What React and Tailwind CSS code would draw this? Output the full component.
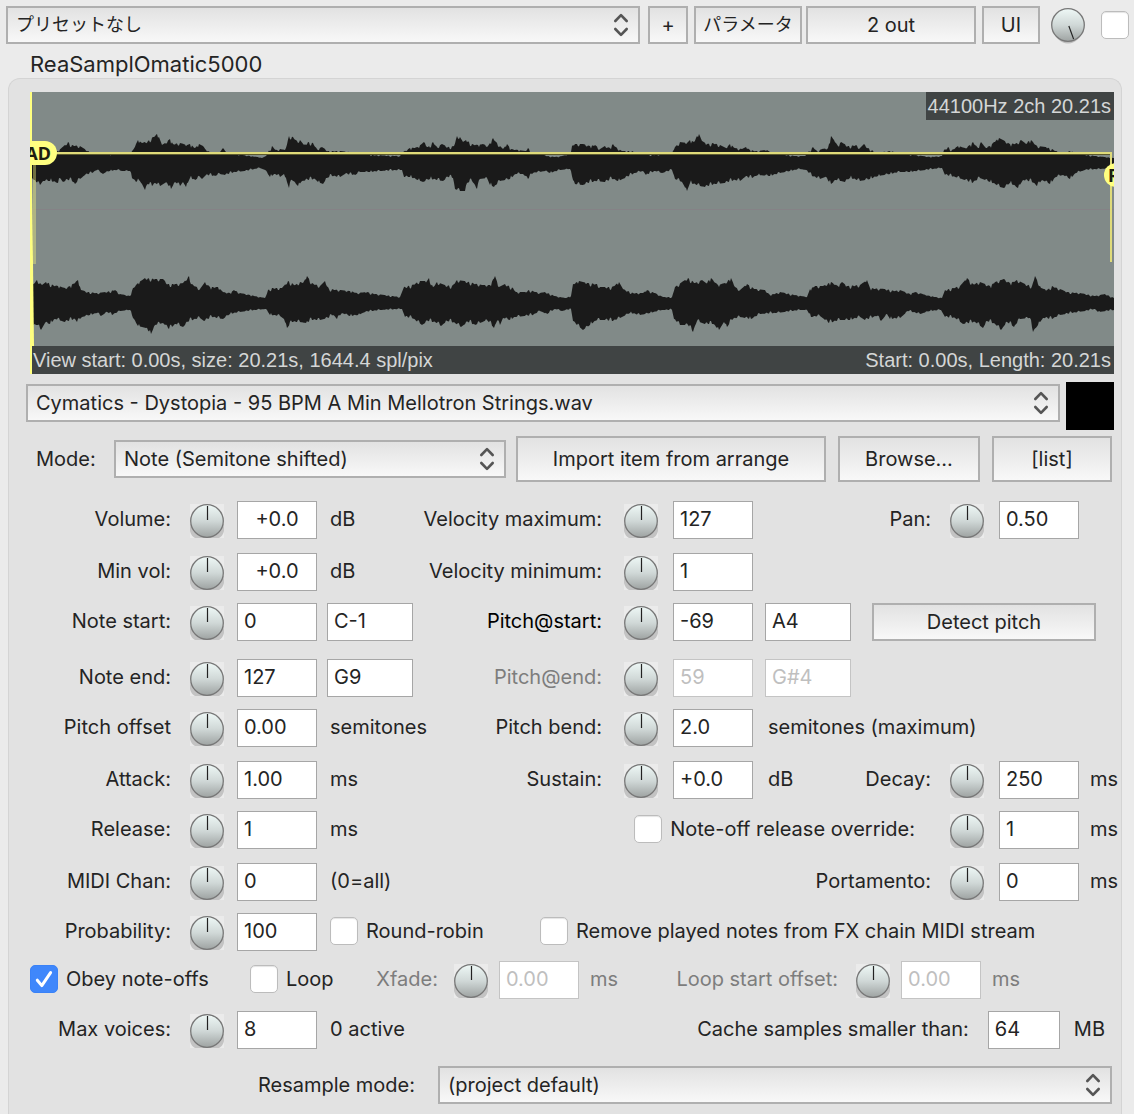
import React from "react";

const LEFT_TOP =
  "30,156 40,154 50,152 58,151 65,145 68,142 72,145 80,146 88,151 92,153 100,154 120,154 130,153 133,150 138,140 142,143 148,141 153,137 157,134 159,137 162,145 165,143 170,139 173,144 180,143 187,145 190,144 195,148 199,144 203,146 206,150 210,152 220,152 223,148 226,152 235,154 250,156 258,157 262,158 266,156 268,152 272,146 276,150 280,149 285,150 289,136 293,137 297,141 300,140 304,145 308,142 313,143 317,149 322,147 328,151 340,151 350,152 360,153 370,155 400,156 403,152 410,148 418,147 424,142 428,147 433,142 437,147 442,144 448,147 454,146 457,136 460,137 463,142 466,140 472,144 478,145 483,144 488,146 490,143 493,138 497,143 503,149 507,144 511,149 518,150 525,151 528,148 532,152 540,154 548,156 555,157 562,156 570,154 572,146 575,144 583,144 590,146 595,145 600,149 605,146 610,148 613,144 617,148 622,151 632,151 640,154 655,155 672,153 675,147 680,142 687,143 690,140 694,142 697,136 699,134 702,141 707,144 713,143 720,145 726,148 730,144 735,148 742,149 746,147 750,150 756,151 767,150 770,152 780,154 795,156 805,156 809,151 813,147 817,151 822,149 828,148 831,136 834,140 838,146 841,142 848,146 856,145 860,148 864,144 868,148 872,150 875,153 890,151 900,153 915,155 930,157 942,156 944,150 948,147 952,150 958,146 965,148 970,145 973,142 978,148 981,142 985,147 990,146 994,142 999,138 1003,140 1010,144 1017,143 1021,140 1025,143 1031,140 1037,146 1046,147 1052,149 1056,151 1065,153 1070,151 1080,154 1095,156 1114,158";
const LEFT_BOTTOM =
  "30,176 34,180 40,185 43,181 50,181 58,183 60,178 63,182 68,180 72,181 75,184 80,179 85,175 92,173 97,170 103,174 106,172 110,171 117,170 122,171 130,171 132,178 136,182 139,180 142,184 145,190 148,184 152,186 155,183 160,186 165,183 168,185 171,189 175,182 180,186 183,182 186,187 190,178 195,180 200,177 202,179 206,175 215,176 220,174 225,175 235,172 245,171 260,168 265,170 270,177 275,174 280,177 284,174 287,182 289,188 292,180 298,186 302,181 308,180 315,179 318,182 323,184 327,178 332,176 340,177 345,174 355,175 360,172 370,172 380,171 402,170 404,177 410,177 418,180 423,182 430,179 437,180 443,181 448,177 453,178 455,189 460,191 465,191 467,183 472,181 477,189 480,179 487,178 490,185 494,187 500,181 510,179 516,174 523,174 528,179 533,173 545,171 550,173 560,170 570,169 573,180 575,184 583,185 588,183 597,181 605,182 612,179 618,181 625,178 635,173 643,171 646,175 655,171 662,173 672,170 675,179 682,182 687,191 690,183 700,186 705,187 715,184 725,183 735,180 740,181 745,177 752,178 758,175 770,176 780,173 790,171 800,169 806,170 812,176 820,179 825,177 831,184 836,180 845,182 850,178 860,181 870,179 878,176 890,174 900,172 910,172 925,170 942,168 945,175 955,177 965,180 972,183 980,178 990,182 995,184 1000,187 1004,188 1010,183 1018,188 1023,180 1032,182 1037,186 1042,180 1050,184 1056,177 1063,175 1070,179 1076,173 1085,170 1100,169 1114,168";
const RIGHT_TOP =
  "30,285 33,284 37,280 42,285 46,282 53,285 58,286 65,288 70,286 78,280 81,290 88,292 97,293 105,292 115,290 120,294 130,296 133,288 138,283 145,278 155,279 163,279 168,284 175,284 183,283 189,276 192,284 200,289 205,282 210,287 218,287 223,292 230,293 234,290 240,293 250,295 265,298 268,290 272,288 282,288 288,281 295,285 300,282 303,283 307,276 312,283 320,286 325,281 329,289 340,290 350,291 357,293 367,292 375,294 385,295 400,297 404,287 412,285 420,281 427,281 429,278 433,287 437,282 445,285 452,286 457,280 465,281 473,283 482,285 490,285 495,276 499,287 505,284 513,288 516,292 525,292 529,290 540,293 545,292 555,296 565,298 571,296 573,284 579,281 587,283 597,284 600,287 612,287 619,282 623,289 633,293 643,293 647,290 655,293 663,297 672,297 675,287 682,282 688,278 695,283 702,280 706,283 711,278 718,285 725,283 731,278 735,287 740,290 747,284 755,289 765,290 770,295 780,292 795,295 807,297 810,289 815,286 823,286 831,282 838,286 842,282 847,286 860,285 867,280 870,288 885,289 895,291 900,290 910,294 915,292 930,296 942,298 945,290 953,288 960,286 967,278 973,284 980,282 990,286 995,282 1004,279 1010,283 1017,280 1025,284 1032,286 1035,276 1041,288 1047,290 1052,286 1060,289 1067,292 1080,293 1095,296 1105,294 1114,298";
const RIGHT_BOTTOM =
  "30,325 38,325 41,330 45,323 50,324 55,319 65,322 75,319 77,322 82,317 90,315 97,313 101,316 107,312 112,315 120,311 130,310 133,318 138,326 146,328 151,334 155,325 163,323 169,329 176,324 183,327 189,321 200,318 204,321 212,317 223,319 230,314 240,312 255,310 266,309 270,315 280,316 284,319 287,328 292,322 300,322 306,323 312,320 320,320 328,318 333,315 337,319 342,313 350,316 358,315 365,312 380,310 402,309 405,317 412,318 422,325 428,321 437,323 441,326 447,321 455,323 461,327 468,322 475,325 480,323 487,320 494,328 497,321 500,325 503,318 510,320 515,317 525,316 533,315 540,311 547,314 555,309 562,311 571,309 573,321 577,325 583,330 590,325 597,320 605,320 613,321 620,318 630,313 640,315 650,313 662,310 672,310 674,319 680,325 688,325 693,332 697,321 705,324 713,324 719,330 724,322 727,327 733,319 740,317 751,319 760,314 775,313 785,312 800,310 807,310 811,317 820,316 829,323 840,320 850,320 860,317 865,320 877,316 881,321 887,314 890,319 900,318 908,311 920,314 930,311 941,310 945,317 955,318 963,324 975,322 983,328 987,321 995,324 1001,330 1007,322 1014,327 1020,319 1030,318 1033,332 1038,325 1043,318 1052,319 1060,315 1072,313 1085,311 1095,309 1098,312 1114,310";

// Adds the fine sample-level ripple between the peaks of an envelope.
function envelope(text, direction, middle) {
  const peaks = text.split(" ").map((p) => p.split(",").map(Number));
  const out = [];
  for (let i = 0; i < peaks.length - 1; i++) {
    const [x0, y0] = peaks[i];
    const [x1, y1] = peaks[i + 1];
    out.push([x0, y0]);
    for (let x = x0 + 1; x < x1; x += 1) {
      const y = y0 + ((y1 - y0) * (x - x0)) / (x1 - x0);
      const depth = Math.min(3, Math.abs(y - middle) / 6);
      const ripple = x % 4 < 2 ? 0 : (((x >> 2) * 37) % 5) / 4;
      out.push([x, y + direction * depth * ripple]);
    }
  }
  out.push(peaks[peaks.length - 1]);
  return out;
}

function channel(top, bottom, middle) {
  return [...envelope(top, 1, middle), ...envelope(bottom, -1, middle).reverse()]
    .map((p) => p.join(","))
    .join(" ");
}

function Waveform() {
  return (
    <div className="relative ml-[21px] mr-[7px] h-[282px] overflow-hidden bg-[#818a88] font-['Liberation_Sans',sans-serif] text-[20px] leading-7 text-[#d4d6d6]">
      <svg viewBox="30 92 1084 282" preserveAspectRatio="none" className="block h-full w-full" aria-hidden="true">
        <rect x="30" y="209" width="1084" height="1" fill="#858286" />
        <polygon points={channel(LEFT_TOP, LEFT_BOTTOM, 162)} fill="#1a1a1a" />
        <polygon points={channel(RIGHT_TOP, RIGHT_BOTTOM, 303)} fill="#1a1a1a" />
        <rect x="30" y="346" width="1084" height="28" fill="#404444" />
        <rect x="33" y="164" width="3" height="100" fill="#f5f27a" fillOpacity="0.4" />
        <path d="M32 180 L34 346 H30 V180 Z" fill="#ffff80" />
        <rect x="30" y="92" width="2" height="282" fill="#ffff80" />
        <rect x="56" y="154" width="1054" height="1" fill="#5d5b30" />
        <path d="M56 153 H1111 V262" fill="none" stroke="#dfdb7a" strokeWidth="2" />
      </svg>
      <span className="absolute -left-3 top-[49px] flex h-6 w-[39px] items-center justify-end rounded-full bg-[#ffff80] pr-1.5 font-['Noto_Sans'] text-[18px] font-bold leading-6 text-[#1d1d10]">
        AD
      </span>
      <span className="absolute -right-3.5 top-[71px] flex h-6 w-6 items-center rounded-full bg-[#ffff80] pl-1 font-['Noto_Sans'] text-[18px] font-bold leading-6 text-[#1d1d10]">
        R
      </span>
      <span className="absolute right-0 top-0 whitespace-nowrap bg-[#404444] pl-0.5 pr-[3px]">44100Hz 2ch 20.21s</span>
      <div className="absolute inset-x-0 bottom-0 flex justify-between whitespace-nowrap pl-[3px] pr-[3px]">
        <span>View start: 0.00s, size: 20.21s, 1644.4 spl/pix</span>
        <span>Start: 0.00s, Length: 20.21s</span>
      </div>
    </div>
  );
}

function Button({ children, className }) {
  return (
    <button
      type="button"
      className={`border-2 border-[#afafaf] bg-linear-to-b from-[#e2e2e2] to-[#f8f8f8] text-center whitespace-nowrap ${className}`}
    >
      {children}
    </button>
  );
}

function Select({ id, label, value, className }) {
  return (
    <div className={`relative h-[38px] min-w-0 ${className}`}>
      <select
        id={id}
        aria-label={label}
        className="h-full w-full appearance-none border-2 border-[#afafaf] bg-linear-to-b from-[#e2e2e2] to-[#f8f8f8] pl-2 pr-9"
      >
        <option>{value}</option>
      </select>
      <svg viewBox="0 0 16 24" className="pointer-events-none absolute right-[11px] top-[7px] h-6 w-4" fill="none" stroke="#555" strokeWidth="2.6" strokeLinecap="round" strokeLinejoin="round" aria-hidden="true">
        <path d="M2.3 8 L8 2.2 L13.7 8" />
        <path d="M2.3 16 L8 21.8 L13.7 16" />
      </svg>
    </div>
  );
}

function Knob({ label, bare, disabled, angle = 0 }) {
  return (
    <span className={`relative h-[34px] w-[34px] shrink-0 ${bare ? "" : "mt-0.5 bg-[#ebebeb]"}`}>
      <svg viewBox="0 0 34 34" className="block h-full w-full overflow-visible" aria-hidden="true">
        <defs>
          <linearGradient id="knob" x1="0" y1="0" x2="0" y2="1">
            <stop offset="0" stopColor="#eef8f6" />
            <stop offset="0.5" stopColor="#d0d8d7" />
            <stop offset="1" stopColor="#9ea3a2" />
          </linearGradient>
        </defs>
        {bare ? (
          <ellipse cx="17" cy="19.5" rx="14.5" ry="16" fill="#bdbdbd" />
        ) : (
          <path d="M0 20 H34 V27 Q33 32 29 34 H5 Q1 32 0 27 Z" fill="#c3c3c3" />
        )}
        <circle cx="17" cy="17" r="16.3" fill="url(#knob)" stroke="#777" strokeWidth="1.3" />
        <path d="M17.5 2 V16" stroke="#222" strokeWidth="1.2" transform={`rotate(${angle} 17.5 17)`} />
      </svg>
      <input type="range" aria-label={label} disabled={disabled} className="absolute inset-0 h-full w-full opacity-0" />
    </span>
  );
}

function Field({ label, value, disabled, center, className = "w-20" }) {
  return (
    <input
      type="text"
      aria-label={label}
      defaultValue={value}
      disabled={disabled}
      className={`h-[38px] shrink-0 border border-[#a6a6a6] bg-white px-1.5 pb-0.5 disabled:border-[#c4c4c4] disabled:text-[#bfbfbf] ${
        center ? "text-center" : ""
      } ${className}`}
    />
  );
}

function Check({ id, label, checked }) {
  return (
    <span className="flex shrink-0 items-center gap-2 whitespace-nowrap">
      <span className="relative h-7 w-7 shrink-0">
        <input
          id={id}
          type="checkbox"
          aria-label={label ? undefined : "Bypass"}
          defaultChecked={checked}
          className="peer block h-7 w-7 appearance-none rounded-[5px] border border-[#bcbcbc] bg-white shadow-[inset_0_1px_1px_#e4e4e4] checked:border-[#3a82f7] checked:bg-[#3f87fb] checked:shadow-none"
        />
        <svg viewBox="0 0 28 28" className="pointer-events-none absolute inset-0 hidden h-7 w-7 peer-checked:block" fill="none" stroke="#fff" strokeWidth="3" strokeLinecap="round" strokeLinejoin="round" aria-hidden="true">
          <path d="M7.3 15.2 L11.8 20.6 L20.6 7.6" />
        </svg>
      </span>
      {label && <label htmlFor={id}>{label}</label>}
    </span>
  );
}

function Left({ label, name, value, note, unit, center, children }) {
  return (
    <div className="flex min-w-0 items-center whitespace-nowrap">
      <span className="w-[162px] shrink-0 pb-0.5 text-right">{label}</span>
      <span className="ml-[19px] flex">
        <Knob label={`${name} knob`} />
      </span>
      <span className="ml-[13px] flex items-center">
        <Field label={name} value={value} center={center} />
        {note && <Field label={`${name} note`} value={note} className="ml-2.5 w-[86px]" />}
        {unit && <span className="ml-[13px] pb-0.5">{unit}</span>}
        {children}
      </span>
    </div>
  );
}

function Middle({ label, name, value, note, unit, disabled, strong }) {
  return (
    <div className="flex min-w-0 items-center whitespace-nowrap">
      <span className={`w-[192px] shrink-0 pb-0.5 text-right ${disabled ? "text-[#7d7d7d]" : strong ? "text-black" : ""}`}>
        {label}
      </span>
      <span className="ml-[22px] flex">
        <Knob label={`${name} knob`} disabled={disabled} />
      </span>
      <span className="ml-[15px] flex items-center">
        <Field label={name} value={value} disabled={disabled} />
        {note && <Field label={`${name} note`} value={note} disabled={disabled} className="ml-3 w-[86px]" />}
        {unit && <span className="ml-[15px] pb-0.5">{unit}</span>}
      </span>
    </div>
  );
}

function Right({ label, name, value, unit, before, className = "" }) {
  return (
    <div className={`flex min-w-0 items-center whitespace-nowrap pr-[3px] ${className}`}>
      <span className="flex flex-1 justify-end pb-0.5">{before || label}</span>
      <span className="ml-[19px] flex">
        <Knob label={`${name} knob`} />
      </span>
      <span className="ml-[15px] flex items-center">
        <Field label={name} value={value} />
        <span className="ml-[11px] w-7 pb-0.5">{unit}</span>
      </span>
    </div>
  );
}

function Row({ children, className = "mt-3" }) {
  return <div className={`grid grid-cols-[401fr_390fr_321fr] ${className}`}>{children}</div>;
}

export default function App() {
  return (
    <main className="flex min-h-screen flex-col overflow-hidden bg-[#ebebeb] font-['Inter','Noto_Sans_CJK_JP',sans-serif] text-[20px] leading-7 text-[#242424]">
      <header className="flex items-center pl-1.5 pr-[5px] pt-1.5">
        <Select label="Preset" value="プリセットなし" className="flex-1 text-[18px]" />
        <Button className="ml-2 h-[38px] w-10">+</Button>
        <Button className="ml-1.5 h-[38px] w-[108px] text-[18px]">パラメータ</Button>
        <Button className="ml-1 h-[38px] w-[170px]">2 out</Button>
        <Button className="ml-1.5 h-[38px] w-[58px]">UI</Button>
        <span className="ml-[11px] mr-4 flex">
          <Knob label="Wet" bare angle={160} />
        </span>
        <Check id="bypass" />
      </header>

      <h1 className="pl-[30px] pt-1.5 text-[22px] leading-7">ReaSamplOmatic5000</h1>

      <section className="mx-2 mr-3 flex flex-1 flex-col rounded-t-xl border border-b-0 border-[#d4d4d4] bg-[#e2e2e2] pb-2.5 pt-[13px]">
        <Waveform />

        <div className="ml-[17px] mr-[7px] mt-2 flex gap-1.5">
          <Select label="Sample file" value="Cymatics - Dystopia - 95 BPM A Min Mellotron Strings.wav" className="mt-0.5 flex-1" />
          <div className="h-12 w-12 bg-black" />
        </div>

        <div className="ml-[27px] mr-[9px] mt-1.5 flex items-center whitespace-nowrap">
          <label htmlFor="mode" className="w-[78px]">Mode:</label>
          <Select id="mode" label="Mode" value="Note (Semitone shifted)" className="flex-[392]" />
          <Button className="ml-2.5 h-[46px] flex-[306]">Import item from arrange</Button>
          <Button className="ml-3 h-[46px] flex-[138]">Browse...</Button>
          <Button className="ml-3 h-[46px] flex-[116]">[list]</Button>
        </div>

        <Row className="mt-[19px]">
          <Left label="Volume:" name="Volume" value="+0.0" unit="dB" center />
          <Middle label="Velocity maximum:" name="Velocity maximum" value="127" />
          <Right label="Pan:" name="Pan" value="0.50" />
        </Row>
        <Row className="mt-3.5">
          <Left label="Min vol:" name="Min vol" value="+0.0" unit="dB" center />
          <Middle label="Velocity minimum:" name="Velocity minimum" value="1" />
        </Row>
        <Row>
          <Left label="Note start:" name="Note start" value="0" note="C-1" />
          <Middle label="Pitch@start:" name="Pitch at start" value="-69" note="A4" strong />
          <div className="flex min-w-0 pl-[72px] pr-[25px]">
            <Button className="h-[38px] flex-1">Detect pitch</Button>
          </div>
        </Row>
        <Row className="mt-[18px]">
          <Left label="Note end:" name="Note end" value="127" note="G9" />
          <Middle label="Pitch@end:" name="Pitch at end" value="59" note="G#4" disabled />
        </Row>
        <Row>
          <Left label="Pitch offset" name="Pitch offset" value="0.00" unit="semitones" />
          <Middle label="Pitch bend:" name="Pitch bend" value="2.0" unit="semitones (maximum)" />
        </Row>
        <Row className="mt-3.5">
          <Left label="Attack:" name="Attack" value="1.00" unit="ms" />
          <Middle label="Sustain:" name="Sustain" value="+0.0" unit="dB" />
          <Right label="Decay:" name="Decay" value="250" unit="ms" />
        </Row>
        <Row>
          <Left label="Release:" name="Release" value="1" unit="ms" />
          <Right
            name="Note-off release"
            value="1"
            unit="ms"
            className="col-span-2"
            before={
              <span className="mr-4 flex">
                <Check id="override" label="Note-off release override:" />
              </span>
            }
          />
        </Row>
        <Row className="mt-3.5">
          <Left label="MIDI Chan:" name="MIDI channel" value="0" unit="(0=all)" />
          <Right label="Portamento:" name="Portamento" value="0" unit="ms" className="col-start-3" />
        </Row>
        <Row>
          <Left label="Probability:" name="Probability" value="100">
            <span className="ml-[13px] flex pb-0.5">
              <Check id="robin" label="Round-robin" />
            </span>
          </Left>
          <div className="col-span-2 flex min-w-0 items-center pb-0.5 pl-[130px]">
            <Check id="remove" label="Remove played notes from FX chain MIDI stream" />
          </div>
        </Row>

        <div className="mt-2.5 flex items-center whitespace-nowrap pl-[21px]">
          <span className="flex w-[220px] pb-0.5">
            <Check id="obey" label="Obey note-offs" checked />
          </span>
          <span className="flex w-[126px] pb-0.5">
            <Check id="loop" label="Loop" />
          </span>
          <span className="mr-4 w-[62px] pb-0.5 text-right text-[#7d7d7d]">Xfade:</span>
          <Knob label="Xfade knob" disabled />
          <Field label="Xfade" value="0.00" disabled className="ml-[11px] w-20" />
          <span className="ml-[11px] pb-0.5 text-[#7d7d7d]">ms</span>
          <span className="ml-[18px] mr-[18px] w-[202px] pb-0.5 text-right text-[#7d7d7d]">Loop start offset:</span>
          <Knob label="Loop start offset knob" disabled />
          <Field label="Loop start offset" value="0.00" disabled className="ml-[11px] w-20" />
          <span className="ml-[11px] pb-0.5 text-[#7d7d7d]">ms</span>
        </div>

        <Row>
          <Left label="Max voices:" name="Max voices" value="8" unit="0 active" />
          <div className="col-span-2 flex min-w-0 items-center justify-end whitespace-nowrap pr-4">
            <label htmlFor="cache" className="pb-0.5">Cache samples smaller than:</label>
            <input id="cache" type="text" defaultValue="64" className="ml-[19px] h-[38px] w-[72px] border border-[#a6a6a6] bg-white px-1.5 pb-0.5" />
            <span className="ml-3.5 pb-0.5">MB</span>
          </div>
        </Row>

        <div className="mr-[9px] mt-[17px] flex items-center whitespace-nowrap">
          <label htmlFor="resample" className="w-[406px] text-right">Resample mode:</label>
          <Select id="resample" label="Resample mode" value="(project default)" className="ml-[23px] flex-1" />
        </div>
      </section>
    </main>
  );
}
